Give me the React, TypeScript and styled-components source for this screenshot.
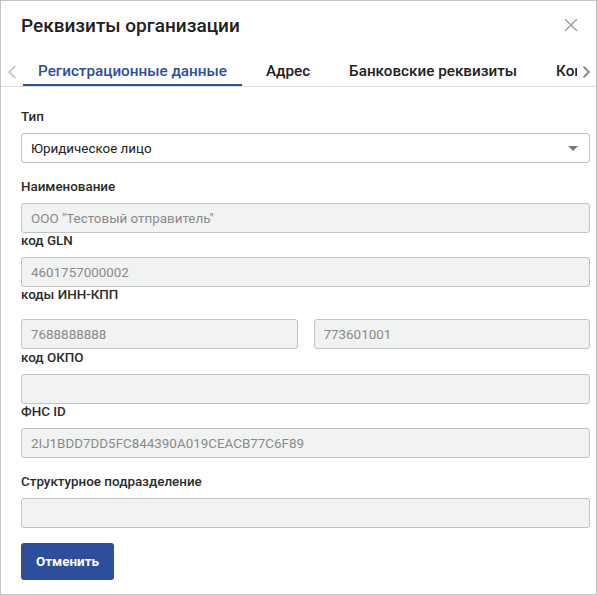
import React from 'react';
import styled, { createGlobalStyle } from 'styled-components';
import { ChevronLeft, ChevronRight, X } from 'lucide-react';

const GlobalStyle = createGlobalStyle`
    html, body {
        margin: 0;
        padding: 0;
        background: #ffffff;
    }
    * {
        box-sizing: border-box;
    }
`;

const colours = {
    primary: '#2d4f9b',
    text: '#212121',
    label: '#2b2b2b',
    border: '#c4c4c4',
    inputBorder: '#c2c2c2',
    disabledBg: '#f1f2f2',
    disabledText: '#8a8a8a',
    divider: '#dcdcdc',
};

const Dialog = styled.div`
    width: 597px;
    height: 595px;
    border: 1px solid ${ colours.border };
    background: #ffffff;
    display: flex;
    flex-direction: column;
    font-family: Roboto, 'Noto Sans', sans-serif;
    color: ${ colours.text };
    overflow: hidden;
`;

const Header = styled.div`
    display: flex;
    align-items: center;
    justify-content: space-between;
    height: 48px;
    padding: 0 14px 0 20px;
`;

const Title = styled.h1`
    margin: 0;
    font-size: 19px;
    font-weight: 500;
    color: ${ colours.text };
`;

const CloseButton = styled.button`
    border: none;
    background: none;
    padding: 0;
    width: 22px;
    height: 22px;
    display: flex;
    align-items: center;
    justify-content: center;
    color: #a0a0a0;
    cursor: pointer;
`;

const TabBar = styled.div`
    display: flex;
    align-items: stretch;
    height: 30px;
    margin-top: 8px;
    border-bottom: 1px solid ${ colours.divider };
`;

const ScrollArrow = styled.div<{ $muted?: boolean; $width: number }>`
    width: ${ p => p.$width }px;
    flex: none;
    display: flex;
    align-items: center;
    justify-content: center;
    color: ${ p => p.$muted ? '#cfcfcf' : '#8f8f8f' };
`;

const TabScroller = styled.div`
    flex: 1;
    display: flex;
    gap: 9px;
    overflow: hidden;
    white-space: nowrap;
`;

const Tab = styled.div<{ $active?: boolean }>`
    position: relative;
    flex: none;
    padding: 0 15px;
    line-height: 29px;
    font-size: 15.25px;
    font-weight: 500;
    color: ${ p => p.$active ? colours.primary : colours.text };

    &::after {
        content: '';
        position: absolute;
        left: 0;
        right: 0;
        bottom: 0;
        height: 2px;
        background: ${ p => p.$active ? colours.primary : 'transparent' };
    }
`;

const Body = styled.div`
    display: flex;
    flex-direction: column;
    padding: 22px 6px 0 20px;
`;

const Field = styled.div<{ $after: number }>`
    display: flex;
    flex-direction: column;
    margin-bottom: ${ p => p.$after }px;
`;

const Label = styled.label<{ $below?: number }>`
    font-size: 13.4px;
    font-weight: 500;
    line-height: 16px;
    color: ${ colours.label };
    margin-bottom: ${ p => p.$below ?? 8 }px;
`;

const InputRow = styled.div`
    display: grid;
    grid-template-columns: 1fr 1fr;
    gap: 16px;
`;

const Input = styled.input`
    width: 100%;
    height: 30px;
    border: 1px solid ${ colours.inputBorder };
    border-radius: 3px;
    background: ${ colours.disabledBg };
    padding: 0 9px;
    font-family: inherit;
    font-size: 13.4px;
    color: ${ colours.disabledText };
    -webkit-text-fill-color: ${ colours.disabledText };
    opacity: 1;
`;

const Select = styled.div`
    height: 30px;
    border: 1px solid ${ colours.inputBorder };
    border-radius: 3px;
    background: #ffffff;
    padding: 0 9px;
    display: flex;
    align-items: center;
    justify-content: space-between;
    font-size: 13.4px;
    color: ${ colours.text };
`;

const Caret = styled.span`
    width: 0;
    height: 0;
    margin-right: 2px;
    border-left: 5px solid transparent;
    border-right: 5px solid transparent;
    border-top: 5px solid #7a7a7a;
`;

const CancelButton = styled.button`
    align-self: flex-start;
    width: 93px;
    height: 37px;
    border: none;
    border-radius: 3px;
    background: ${ colours.primary };
    color: #ffffff;
    font-family: inherit;
    font-size: 13.4px;
    font-weight: 700;
    cursor: pointer;
`;

const tabs = [ 'Регистрационные данные', 'Адрес', 'Банковские реквизиты', 'Контакты' ];

export default function App(): JSX.Element {
    return (
        <>
            <GlobalStyle />
            <Dialog>
                <Header>
                    <Title>Реквизиты организации</Title>
                    <CloseButton aria-label='Закрыть'>
                        <X size={ 22 } strokeWidth={ 1.6 } />
                    </CloseButton>
                </Header>
                <TabBar>
                    <ScrollArrow $muted $width={ 22 }>
                        <ChevronLeft size={ 22 } strokeWidth={ 2.6 } />
                    </ScrollArrow>
                    <TabScroller>
                        { tabs.map( ( t, i ) => (
                            <Tab key={ t } $active={ i === 0 }>{ t }</Tab>
                        ) ) }
                    </TabScroller>
                    <ScrollArrow $width={ 19 }>
                        <ChevronRight size={ 20 } strokeWidth={ 2.6 } />
                    </ScrollArrow>
                </TabBar>
                <Body>
                    <Field $after={ 16 }>
                        <Label>Тип</Label>
                        <Select>
                            <span>Юридическое лицо</span>
                            <Caret />
                        </Select>
                    </Field>
                    <Field $after={ 0 }>
                        <Label>Наименование</Label>
                        <Input disabled value='ООО "Тестовый отправитель"' readOnly />
                    </Field>
                    <Field $after={ 0 }>
                        <Label>код GLN</Label>
                        <Input disabled value='4601757000002' readOnly />
                    </Field>
                    <Field $after={ 1 }>
                        <Label $below={ 16 }>коды ИНН-КПП</Label>
                        <InputRow>
                            <Input disabled value='7688888888' readOnly />
                            <Input disabled value='773601001' readOnly />
                        </InputRow>
                    </Field>
                    <Field $after={ 0 }>
                        <Label>код ОКПО</Label>
                        <Input disabled value='' readOnly />
                    </Field>
                    <Field $after={ 16 }>
                        <Label>ФНС ID</Label>
                        <Input disabled value='2IJ1BDD7DD5FC844390A019CEACB77C6F89' readOnly />
                    </Field>
                    <Field $after={ 15 }>
                        <Label>Структурное подразделение</Label>
                        <Input disabled value='' readOnly />
                    </Field>
                    <CancelButton>Отменить</CancelButton>
                </Body>
            </Dialog>
        </>
    );
}
